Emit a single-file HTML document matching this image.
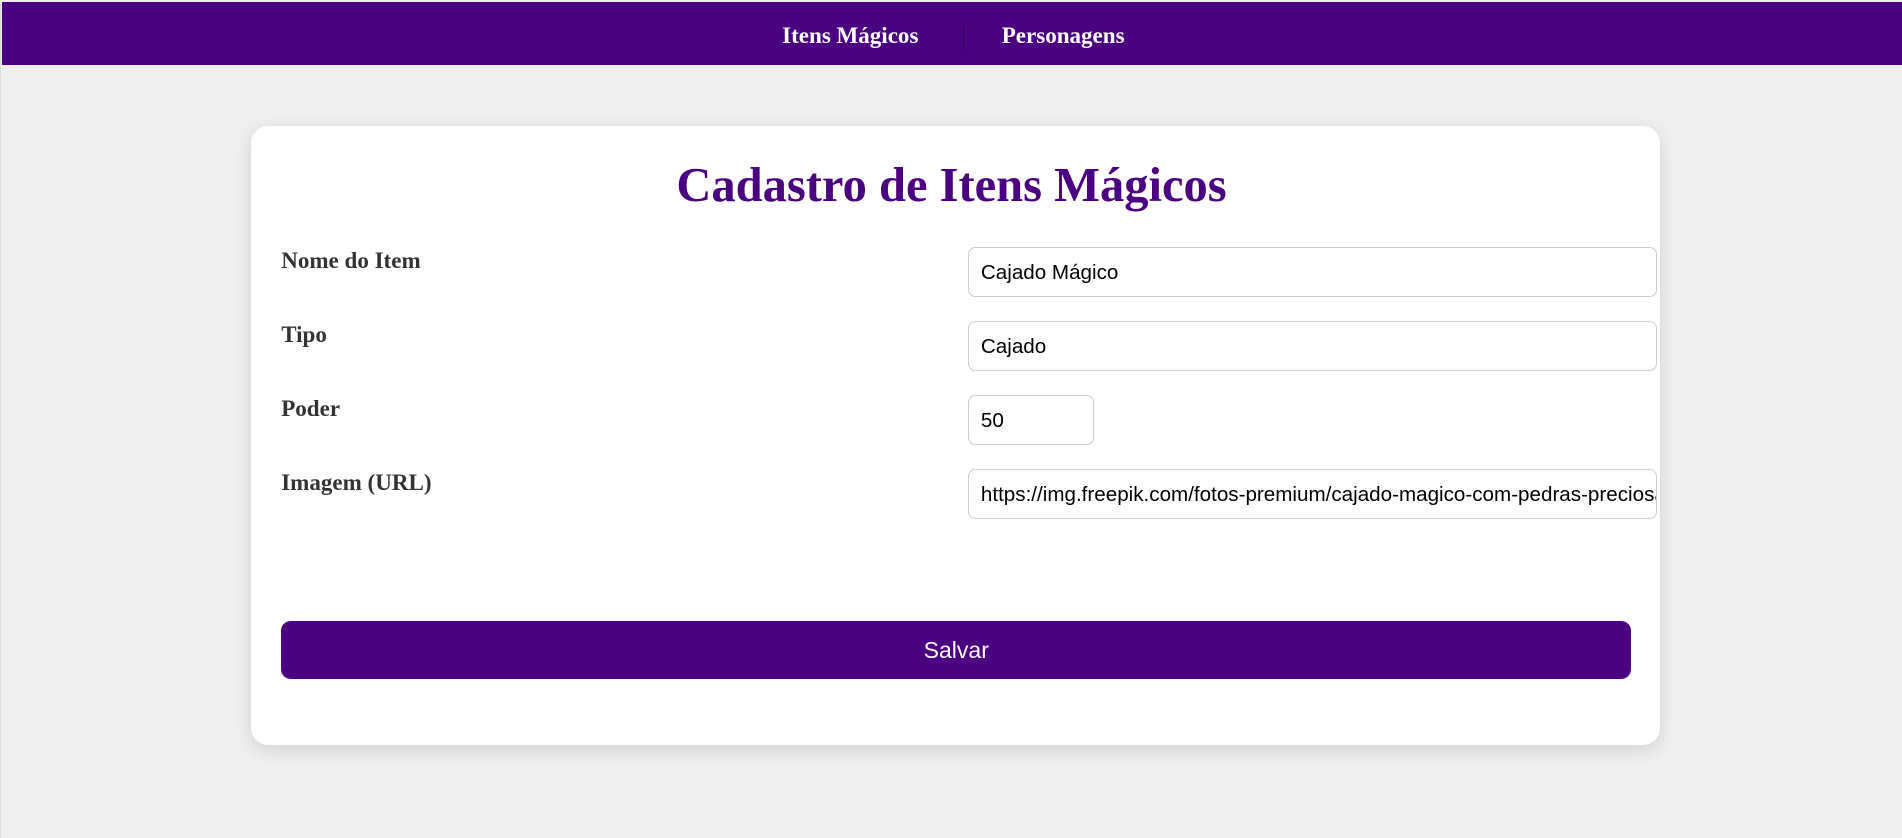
<!DOCTYPE html>
<html><head><meta charset="utf-8"><style>
html,body{margin:0;padding:0}
body{width:1568px;height:691px;zoom:1.21301;background:#efefef;position:relative;overflow:hidden;font-family:"Liberation Serif",serif;border-left:1px solid #ddd;box-sizing:border-box}
.nav{position:absolute;left:1px;top:2px;width:1567px;height:52px;background:#4b0082}
.nav a{position:absolute;top:16px;color:#fff;font-weight:bold;font-size:19px;text-decoration:none}
.sep{position:absolute;left:792px;top:18px;width:1px;height:20px;background:#2a0048}
.card{position:absolute;left:206px;top:104px;width:1162px;height:510px;background:#fff;border-radius:14px;box-shadow:0 4px 14px rgba(0,0,0,.12)}
h1{position:absolute;left:0;right:0;top:130px;margin:0;text-align:center;color:#4b0082;font-size:40px;font-weight:bold}
.lbl{position:absolute;left:231px;color:#333;font-weight:bold;font-size:19px}
.inp{position:absolute;left:797px;width:568px;height:39px;border:1px solid #ccc;border-radius:6px;background:#fff;font-family:"Liberation Sans",sans-serif;font-size:17px;line-height:41px;padding-left:10px;box-sizing:border-box;color:#000;white-space:nowrap;overflow:hidden}
.btn{position:absolute;left:231px;top:512px;width:1113px;height:48px;background:#4b0082;border-radius:8px;color:#fff;font-family:"Liberation Sans",sans-serif;font-size:19px;text-align:center;line-height:48px}
</style></head><body>
<div class="nav"><a style="left:643px">Itens Mágicos</a><div class="sep"></div><a style="left:824px">Personagens</a></div>
<div class="card"></div>
<h1>Cadastro de Itens Mágicos</h1>
<div class="lbl" style="top:204px">Nome do Item</div>
<div class="lbl" style="top:265px">Tipo</div>
<div class="lbl" style="top:326px">Poder</div>
<div class="lbl" style="top:387px">Imagem (URL)</div>
<div class="inp" style="top:204px;height:41px">Cajado Mágico</div>
<div class="inp" style="top:265px;height:41px">Cajado</div>
<div class="inp" style="top:326px;height:41px;width:104px">50</div>
<div class="inp" style="top:387px;height:41px">https://img.freepik.com/fotos-premium/cajado-magico-com-pedras-preciosas.jpg</div>
<div class="btn">Salvar</div>
</body></html>
